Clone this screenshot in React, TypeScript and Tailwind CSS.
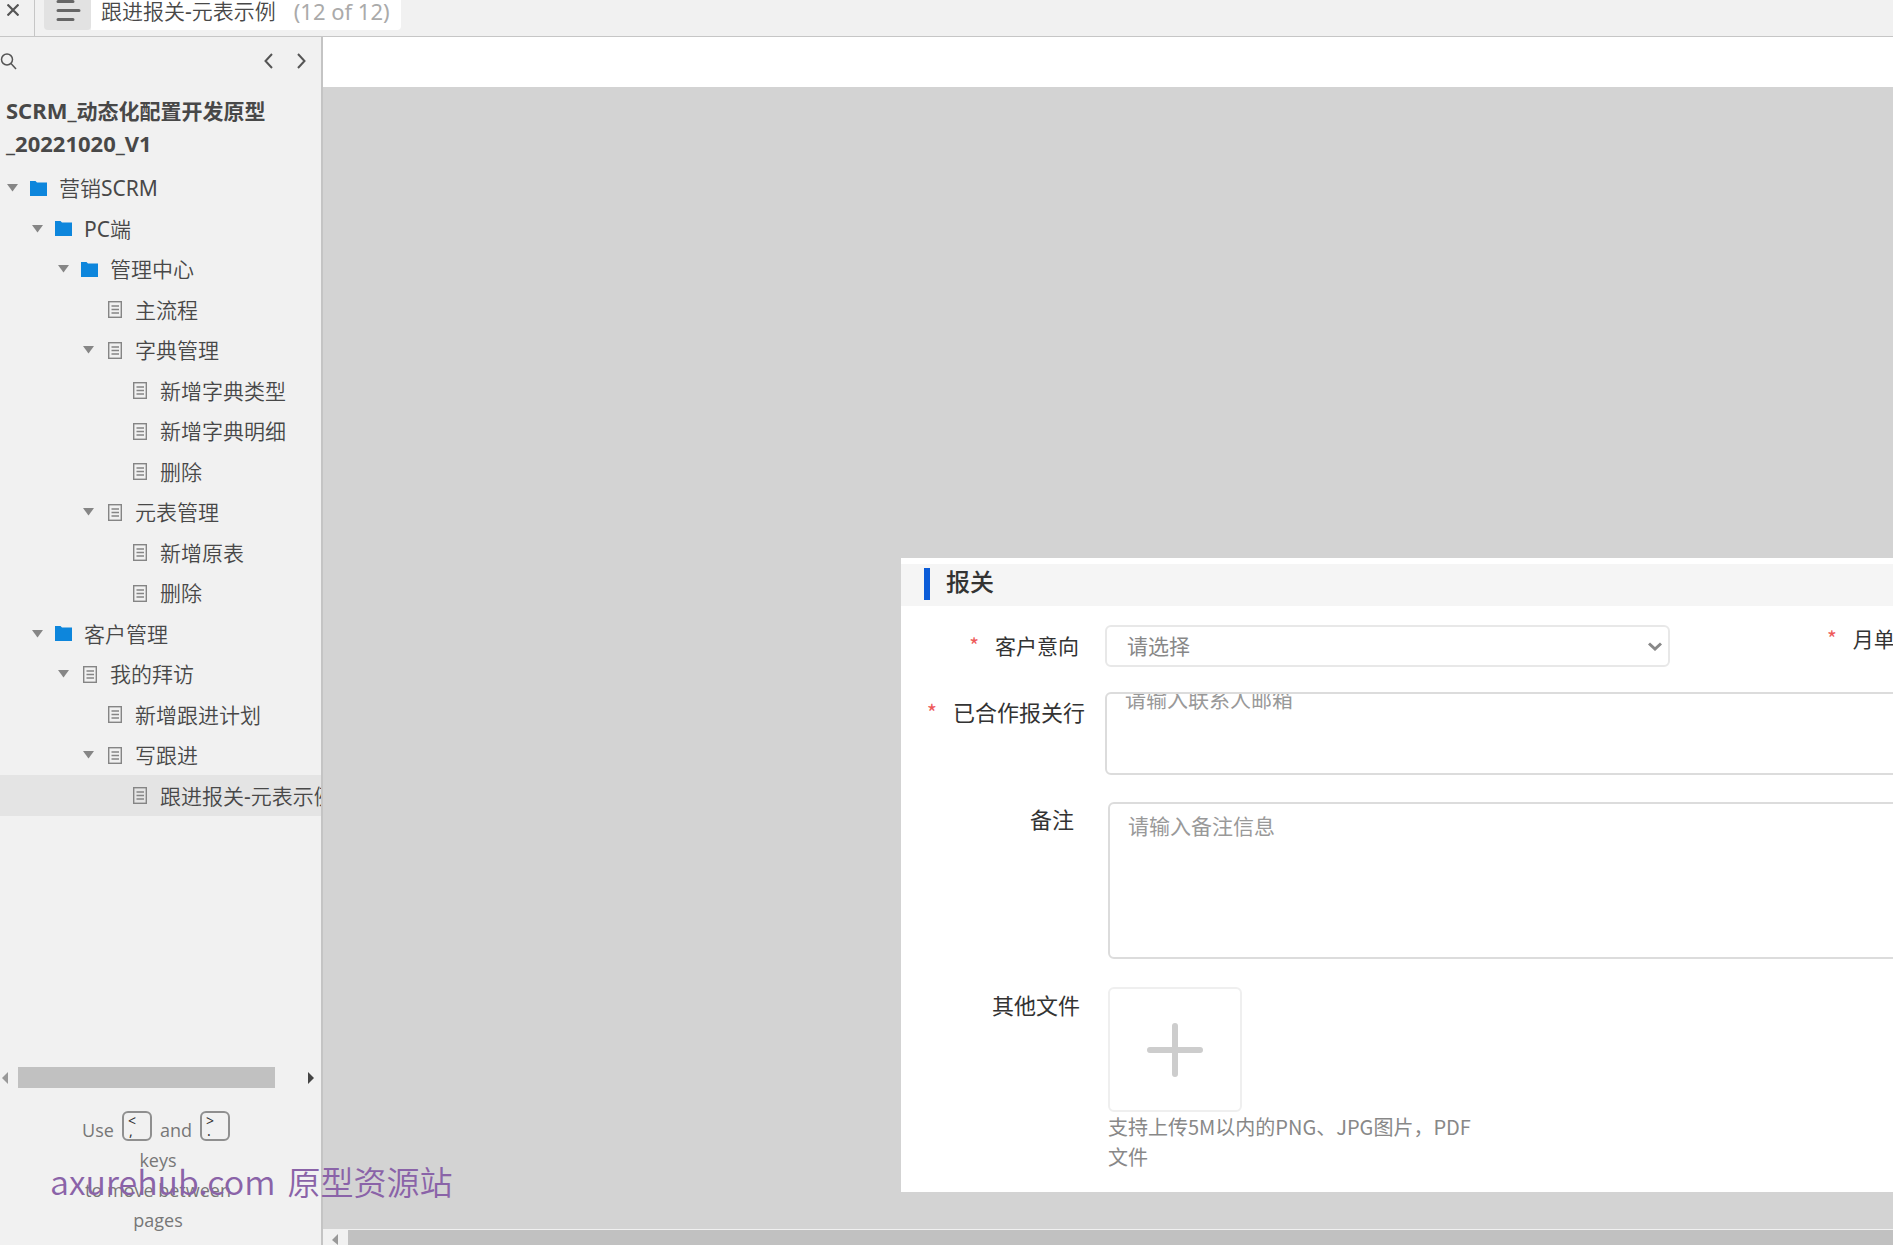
import React from "react";

type Node = { label: string; level: number; kind: "folder" | "page"; open?: boolean; selected?: boolean };

const nodes: Node[] = [
  { label: "营销SCRM", level: 0, kind: "folder", open: true },
  { label: "PC端", level: 1, kind: "folder", open: true },
  { label: "管理中心", level: 2, kind: "folder", open: true },
  { label: "主流程", level: 3, kind: "page" },
  { label: "字典管理", level: 3, kind: "page", open: true },
  { label: "新增字典类型", level: 4, kind: "page" },
  { label: "新增字典明细", level: 4, kind: "page" },
  { label: "删除", level: 4, kind: "page" },
  { label: "元表管理", level: 3, kind: "page", open: true },
  { label: "新增原表", level: 4, kind: "page" },
  { label: "删除", level: 4, kind: "page" },
  { label: "客户管理", level: 1, kind: "folder", open: true },
  { label: "我的拜访", level: 2, kind: "page", open: true },
  { label: "新增跟进计划", level: 3, kind: "page" },
  { label: "写跟进", level: 3, kind: "page", open: true },
  { label: "跟进报关-元表示例", level: 4, kind: "page", selected: true },
];

const indents = ["pl-[7px]", "pl-8", "pl-[58px]", "pl-[83px]", "pl-[108px]"];

function FolderIcon() {
  return (
    <svg width="17" height="15" viewBox="0 0 17 15" className="shrink-0" aria-hidden="true">
      <path d="M0 0h5.5l1.5 1.5h10V15H0z" fill="#0d86dc" />
    </svg>
  );
}

function PageIcon() {
  return (
    <svg width="17" height="17" viewBox="0 0 17 17" className="shrink-0" fill="none" stroke="#858585" aria-hidden="true">
      <rect x="2.7" y="0.7" width="12.6" height="15.6" strokeWidth="1.4" />
      <path d="M5.5 5h7.500M5.500 8.500h7.500M5.500 12h7.500" strokeWidth="1.4" />
    </svg>
  );
}

/* Latin runs are set in the regular weight beside the lighter Chinese glyphs. */
function MixedText({ text }: { text: string }) {
  return (
    <>
      {text.split(/([A-Z]+|-)/).map((part, i) => (
        <span key={i} className={/^[A-Z-]/.test(part) ? "font-normal" : "font-[350]"}>
          {part}
        </span>
      ))}
    </>
  );
}

function TreeRow({ node }: { node: Node }) {
  return (
    <li className={`h-10 even:h-[41px] ${node.selected ? "bg-[#e4e4e4]" : ""}`}>
      <button type="button" className={`flex h-full w-full items-center whitespace-nowrap text-left ${indents[node.level]}`}>
        <span className="w-[23px] shrink-0">
          {node.open && (
            <svg width="11" height="8" viewBox="0 0 11 8" aria-hidden="true">
              <path d="M0 0h11L5.5 7.5z" fill="#868686" />
            </svg>
          )}
        </span>
        {node.kind === "folder" ? <FolderIcon /> : <PageIcon />}
        <span className="ml-3">
          <MixedText text={node.label} />
        </span>
      </button>
    </li>
  );
}

function KeyCap({ top, bottom }: { top: string; bottom: string }) {
  return (
    <kbd className="mx-2 inline-flex h-[30px] w-[30px] flex-col rounded-md border-2 border-[#8f8f8f] pl-1 text-left font-['Noto_Sans'] text-sm text-[#333]">
      <span className="h-3 leading-4">{top}</span>
      <span className="h-3 pl-px leading-3">{bottom}</span>
    </kbd>
  );
}

function FieldLabel({ text, id, required, className }: { text: string; id: string; required?: boolean; className: string }) {
  return (
    <label htmlFor={id} className={`flex shrink-0 justify-end whitespace-nowrap text-[#333] ${className}`}>
      {required && <span className="mr-4 text-[#ee5a5a]">*</span>}
      {text}
    </label>
  );
}

export default function App() {
  return (
    <div className="relative flex h-screen flex-col overflow-hidden bg-[#f1f1f1] font-['Noto_Sans','Noto_Sans_CJK_SC',sans-serif] text-[21px] leading-[30px] text-[#484848]">
      <header className="flex h-[37px] shrink-0 items-start border-b border-[#c6c6c6]">
        <button type="button" aria-label="关闭" className="flex h-9 w-[35px] justify-center border-r border-[#c6c6c6] pr-2 pt-1">
          <svg width="12" height="12" viewBox="0 0 12 12" stroke="#555" strokeWidth="2.2" aria-hidden="true">
            <path d="M0.5 0.5l11 11M11.5 0.5l-11 11" />
          </svg>
        </button>
        <button type="button" aria-label="页面列表" className="ml-[9px] flex h-[30px] w-[47px] items-start rounded-b bg-[#e2e2e2] pl-3">
          <svg width="25" height="24" viewBox="0 0 25 24" stroke="#666" strokeWidth="3" strokeLinecap="round" aria-hidden="true">
            <path d="M2 1.5h15M2 10.5h21M2 19.5h15" />
          </svg>
        </button>
        <div className="flex h-[30px] items-center rounded-br bg-white pb-2 pl-2.5 pr-[11px] leading-6">
          <span>
            <MixedText text="跟进报关-元表示例" />
          </span>
          <span className="ml-[18px] text-[22px] text-[#aaa]">(12 of 12)</span>
        </div>
      </header>

      <div className="flex min-h-0 flex-1">
        <aside className="flex w-[323px] shrink-0 flex-col overflow-hidden border-r-2 border-[#c4c4c4]">
          <div className="flex h-12 shrink-0 items-center">
            <button type="button" aria-label="搜索" className="mr-auto">
              <svg width="17" height="17" viewBox="0 0 17 17" fill="none" stroke="#555" strokeWidth="1.5" aria-hidden="true">
                <circle cx="7" cy="6.5" r="5.5" />
                <path d="M11 10.5l5 5.5" />
              </svg>
            </button>
            <button type="button" aria-label="上一页" className="mr-6">
              <svg width="9" height="16" viewBox="0 0 9 16" fill="none" stroke="#555" strokeWidth="2" aria-hidden="true">
                <path d="M8 1L1.5 8L8 15" />
              </svg>
            </button>
            <button type="button" aria-label="下一页" className="mr-[15px]">
              <svg width="9" height="16" viewBox="0 0 9 16" fill="none" stroke="#555" strokeWidth="2" aria-hidden="true">
                <path d="M1 1L7.500 8L1 15" />
              </svg>
            </button>
          </div>
          <h1 className="mt-[9px] px-1.5 pb-2 font-bold leading-8">
            <span className="text-[22px]">SCRM_</span>动态化配置开发原型
            <br />
            <span className="text-[22px]">_20221020_V1</span>
          </h1>
          <ul>
            {nodes.map((node, i) => (
              <TreeRow key={i} node={node} />
            ))}
          </ul>
          <div className="mt-auto flex h-[21px] shrink-0 items-center pl-0.5 pr-[7px]">
            <svg width="6" height="12" viewBox="0 0 6 12" aria-hidden="true">
              <path d="M6 0v12L0 6z" fill="#999" />
            </svg>
            <div className="ml-2.5 h-full w-[257px] bg-[#c1c1c1]" />
            <svg width="6" height="12" viewBox="0 0 6 12" className="ml-auto" aria-hidden="true">
              <path d="M0 0v12l6-6z" fill="#444" />
            </svg>
          </div>
          <div className="mb-2.5 mt-[23px] shrink-0 pr-[5px] text-center font-['Open_Sans'] text-lg leading-[30px] text-[#777]">
            <div className="flex h-[34px] items-start justify-center pl-1">
              <span className="pt-1">Use</span>
              <KeyCap top="<" bottom="," />
              <span className="pt-1">and</span>
              <KeyCap top=">" bottom="." />
            </div>
            <p>keys</p>
            <p>to move between</p>
            <p>pages</p>
          </div>
        </aside>

        <main className="flex min-w-0 flex-1 flex-col bg-[#d3d3d3]">
          <div className="h-[50px] shrink-0 bg-white" />
          <div className="min-h-0 flex-1 overflow-hidden pl-[578px] pt-[471px]">
            <form className="w-[1500px] bg-white pb-5 pt-1.5 font-['Noto_Sans_CJK_SC',sans-serif]" onSubmit={(e) => e.preventDefault()}>
              <h2 className="flex h-[42px] items-center bg-[#f5f5f5] pb-0.5 pl-[23px] text-2xl font-medium text-[#333]">
                <span className="mr-4 h-8 w-1.5 bg-[#0b5cd8]" />
                <span className="pb-1.5">报关</span>
              </h2>
              <div className="mt-[19px] flex items-start">
                <FieldLabel id="intent" required text="客户意向" className="w-[204px] pr-[26px] pt-[5px]" />
                <div className="relative">
                  <select id="intent" defaultValue="" className="block h-[42px] w-[565px] appearance-none rounded-md border-2 border-[#e8e8e8] bg-white pb-0.5 pl-5 text-[#888]">
                    <option value="">请选择</option>
                  </select>
                  <svg width="14" height="9" viewBox="0 0 14 9" className="pointer-events-none absolute right-2 top-[17px]" fill="none" stroke="#888" strokeWidth="3" aria-hidden="true">
                    <path d="M1 1.500L7 7L13 1.500" />
                  </svg>
                </div>
                <FieldLabel id="orders" required text="月单量" className="ml-[157px] -mt-0.5" />
                <input id="orders" className="ml-6 h-[42px] w-96 rounded-md border-2 border-[#e8e8e8]" />
              </div>
              <div className="mt-[25px] flex items-start">
                <FieldLabel id="brokers" required text="已合作报关行" className="w-[204px] pr-5 pt-1 text-[22px]" />
                <textarea id="brokers" placeholder="请输入联系人邮箱" className="h-[83px] flex-1 resize-none overflow-hidden rounded-md border-2 border-[#dcdcdc] bg-white px-[18px] leading-2 placeholder:text-[#999]" />
              </div>
              <div className="mt-[27px] flex items-start">
                <FieldLabel id="remark" text="备注" className="w-[207px] pr-[34px] pt-px text-[22px]" />
                <textarea id="remark" placeholder="请输入备注信息" className="h-[157px] flex-1 resize-none rounded-md border-2 border-[#dcdcdc] bg-white px-[18px] py-1.5 placeholder:text-[#999]" />
              </div>
              <div className="mt-7 flex items-start">
                <FieldLabel id="files" text="其他文件" className="w-[207px] pr-7 pt-0.5 text-[22px]" />
                <div>
                  <button id="files" type="button" aria-label="上传文件" className="flex h-[125px] w-[134px] items-center justify-center rounded-md border-2 border-[#efefef]">
                    <svg width="56" height="54" viewBox="0 0 56 54" stroke="#cdcdcd" strokeWidth="6" strokeLinecap="round" aria-hidden="true">
                      <path d="M28 3v48M3 27h50" />
                    </svg>
                  </button>
                  <p className="w-[380px] text-xl leading-[30px] text-[#888]">
                    支持上传5M以内的PNG、JPG图片，PDF
                    <br />
                    文件
                  </p>
                </div>
              </div>
            </form>
          </div>
          <div className="flex h-4 shrink-0 items-end bg-[#f1f1f1]">
            <svg width="25" height="15" viewBox="0 0 25 15" aria-hidden="true">
              <path d="M15 4v11L9 10z" fill="#999" />
            </svg>
            <div className="h-[15px] flex-1 bg-[#c1c1c1]" />
          </div>
        </main>
      </div>

      <div className="pointer-events-none absolute bottom-[41px] left-[50px] flex items-baseline gap-3 whitespace-nowrap font-['Noto_Sans_CJK_SC',sans-serif] font-[350] leading-[46px] text-[#8a63a8]">
        <span className="text-[34px]">axurehub.com</span>
        <span className="text-[33px]">原型资源站</span>
      </div>
    </div>
  );
}
